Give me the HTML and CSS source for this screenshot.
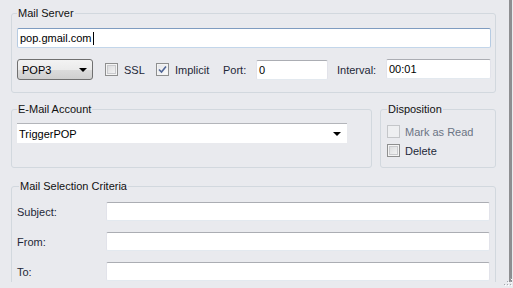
FILE: index.html
```html
<!DOCTYPE html>
<html lang="en">
<head>
    <meta charset="UTF-8">
    <meta name="viewport" content="width=device-width, initial-scale=1.0">
    <title>POP Trigger</title>
    <link rel="stylesheet" href="styles.css">
</head>
<body>
    <div class="window">
        <div class="panel">
            <fieldset class="group">
                <legend>Mail Server</legend>
                <div class="field field-focus">pop.gmail.com<span class="caret"></span></div>
                <div class="server-row">
                    <div class="dropdown">POP3<span class="arrow"></span></div>
                    <label class="check check-ssl"><span class="box"></span>SSL</label>
                    <label class="check check-implicit">
                        <span class="box">
                            <svg width="11" height="11" viewBox="0 0 11 11"><path d="M2 5.5 L4.5 8 L9 2.5" fill="none" stroke="#4f6596" stroke-width="1.6"/></svg>
                        </span>Implicit
                    </label>
                    <span class="lbl lbl-port">Port:</span>
                    <div class="field field-port">0</div>
                    <span class="lbl lbl-interval">Interval:</span>
                    <div class="field field-interval">00:01</div>
                </div>
            </fieldset>

            <div class="account-row">
                <fieldset class="group group-account">
                    <legend>E-Mail Account</legend>
                    <div class="combo">TriggerPOP<span class="arrow"></span></div>
                </fieldset>
                <fieldset class="group group-disposition">
                    <legend>Disposition</legend>
                    <label class="check check-row disabled"><span class="box"></span>Mark as Read</label>
                    <label class="check check-row"><span class="box"></span>Delete</label>
                </fieldset>
            </div>

            <fieldset class="group group-criteria">
                <legend>Mail Selection Criteria</legend>
                <div class="criteria-row"><span class="lbl crit-lbl">Subject:</span><div class="field crit-field"></div></div>
                <div class="criteria-row"><span class="lbl crit-lbl">From:</span><div class="field crit-field"></div></div>
                <div class="criteria-row"><span class="lbl crit-lbl">To:</span><div class="field crit-field"></div></div>
            </fieldset>
        </div>
        <div class="status">
            <svg class="grip" width="10" height="10" viewBox="0 0 10 10">
                <rect x="8" y="0" width="1" height="1" fill="#a3a6ab"/>
                <rect x="5" y="3" width="1" height="1" fill="#a3a6ab"/>
                <rect x="8" y="3" width="1" height="1" fill="#a3a6ab"/>
                <rect x="2" y="6" width="1" height="1" fill="#a3a6ab"/>
                <rect x="5" y="6" width="1" height="1" fill="#a3a6ab"/>
                <rect x="8" y="6" width="1" height="1" fill="#a3a6ab"/>
                <rect x="9" y="1" width="1" height="1" fill="#fff"/>
                <rect x="6" y="4" width="1" height="1" fill="#fff"/>
                <rect x="9" y="4" width="1" height="1" fill="#fff"/>
                <rect x="3" y="7" width="1" height="1" fill="#fff"/>
                <rect x="6" y="7" width="1" height="1" fill="#fff"/>
                <rect x="9" y="7" width="1" height="1" fill="#fff"/>
            </svg>
        </div>
    </div>
</body>
</html>
```

FILE: styles.css
```css
body {
    margin: 0;
    background-color: #e9eaee;
    font-family: "Liberation Sans", Arial, sans-serif;
    font-size: 11px;
    color: #1b1b1b;
}
.window {
    width: 513px;
    height: 288px;
    display: flex;
    flex-direction: column;
    overflow: hidden;
}
.panel {
    box-sizing: border-box;
    width: 512px;
    height: 282px;
    padding: 0 13px 0 11px;
    border-right: 3px solid #8d8e91;
    overflow: hidden;
    flex-shrink: 0;
}

/* group boxes */
.group {
    margin: 6px 0 0;
    padding: 8px 4px 12px 5px;
    border: 1px solid #d2d8de;
    border-radius: 3px;
    min-width: 0;
}
.group legend {
    padding: 0 1px;
    line-height: 14px;
    color: #111;
}
.account-row {
    display: flex;
    gap: 8px;
    margin-top: 9px;
}
.account-row .group {
    margin: 0;
}
.group-account {
    flex: 0 0 361px;
    box-sizing: border-box;
    padding: 7px 4px 0 5px;
}
.group-disposition {
    flex: 1;
    padding: 6px 5px 7px 6px;
}
.group-criteria {
    margin-top: 11px;
    padding: 9px 5px 0 5px;
}
.group-criteria legend {
    margin-left: 2px;
}

/* text fields */
.field {
    box-sizing: border-box;
    height: 20px;
    padding: 0 2px;
    display: flex;
    align-items: center;
    flex-shrink: 0;
    background-color: #fff;
    border: 1px solid;
    border-color: #abadb3 #e2e3ea #e3e9ef #e2e3ea;
    border-radius: 2px;
    color: #000;
}
.field-focus {
    border-color: #7f9cc0 #b6cbe2 #c3d6ea #b6cbe2;
}
.caret {
    width: 1px;
    height: 13px;
    margin-left: 1px;
    background-color: #000;
}
.server-row {
    display: flex;
    align-items: center;
    margin-top: 11px;
}
.server-row > * {
    flex-shrink: 0;
}
.dropdown {
    box-sizing: border-box;
    width: 76px;
    height: 21px;
    padding: 0 5px 0 4px;
    display: flex;
    align-items: center;
    justify-content: space-between;
    border: 1px solid #707070;
    border-radius: 3px;
    background: linear-gradient(#f3f3f3, #ebebeb 50%, #dcdcdc 50%, #cfcfcf);
    color: #000;
}
.arrow {
    width: 0;
    height: 0;
    border-left: 4px solid transparent;
    border-right: 4px solid transparent;
    border-top: 4px solid #000;
}
.lbl {
    color: #1e2838;
}
.lbl-port {
    width: 33px;
}
.field-port {
    width: 72px;
}
.lbl-interval {
    width: 49px;
    padding-left: 9px;
}
.server-row .field-interval {
    flex: 1;
    margin-top: -2px;
}

/* check boxes */
.check {
    display: flex;
    align-items: center;
    color: #1e2838;
}
.check .box {
    box-sizing: border-box;
    width: 13px;
    height: 13px;
    margin-right: 6px;
    display: flex;
    align-items: center;
    justify-content: center;
    flex-shrink: 0;
    border: 1px solid #8e8f8f;
    background: linear-gradient(135deg, #d6d7d9, #f8f8f8);
    box-shadow: inset 0 0 0 1px #f4f4f4, inset 0 0 0 2px #c9cacd;
}
.check-implicit .box {
    box-shadow: inset 0 0 0 1px #f4f4f4;
    background: linear-gradient(135deg, #e4e5e8, #fbfbfb);
}
.check-ssl {
    width: 51px;
    margin-left: 12px;
}
.check-implicit {
    width: 67px;
}
.check-row {
    height: 19px;
}
.check-row .box {
    margin-right: 5px;
}
.check.disabled {
    color: #6b7484;
}
.check.disabled .box {
    border-color: #c4c6c9;
    background: #eeeff1;
    box-shadow: none;
}

/* account combo */
.combo {
    box-sizing: border-box;
    width: 330px;
    height: 20px;
    padding: 0 6px 0 2px;
    display: flex;
    align-items: center;
    justify-content: space-between;
    background-color: #fff;
    border-top: 1px solid #b3b5ba;
    color: #000;
}

/* selection criteria */
.criteria-row {
    display: flex;
    align-items: center;
    margin-bottom: 11px;
}
.crit-lbl {
    width: 89px;
    flex-shrink: 0;
}
.crit-field {
    flex: 1;
    height: 19px;
}

/* status strip */
.status {
    height: 6px;
    position: relative;
    background-color: #e9eaee;
}
.grip {
    position: absolute;
    right: 1px;
    bottom: 0;
}
```
